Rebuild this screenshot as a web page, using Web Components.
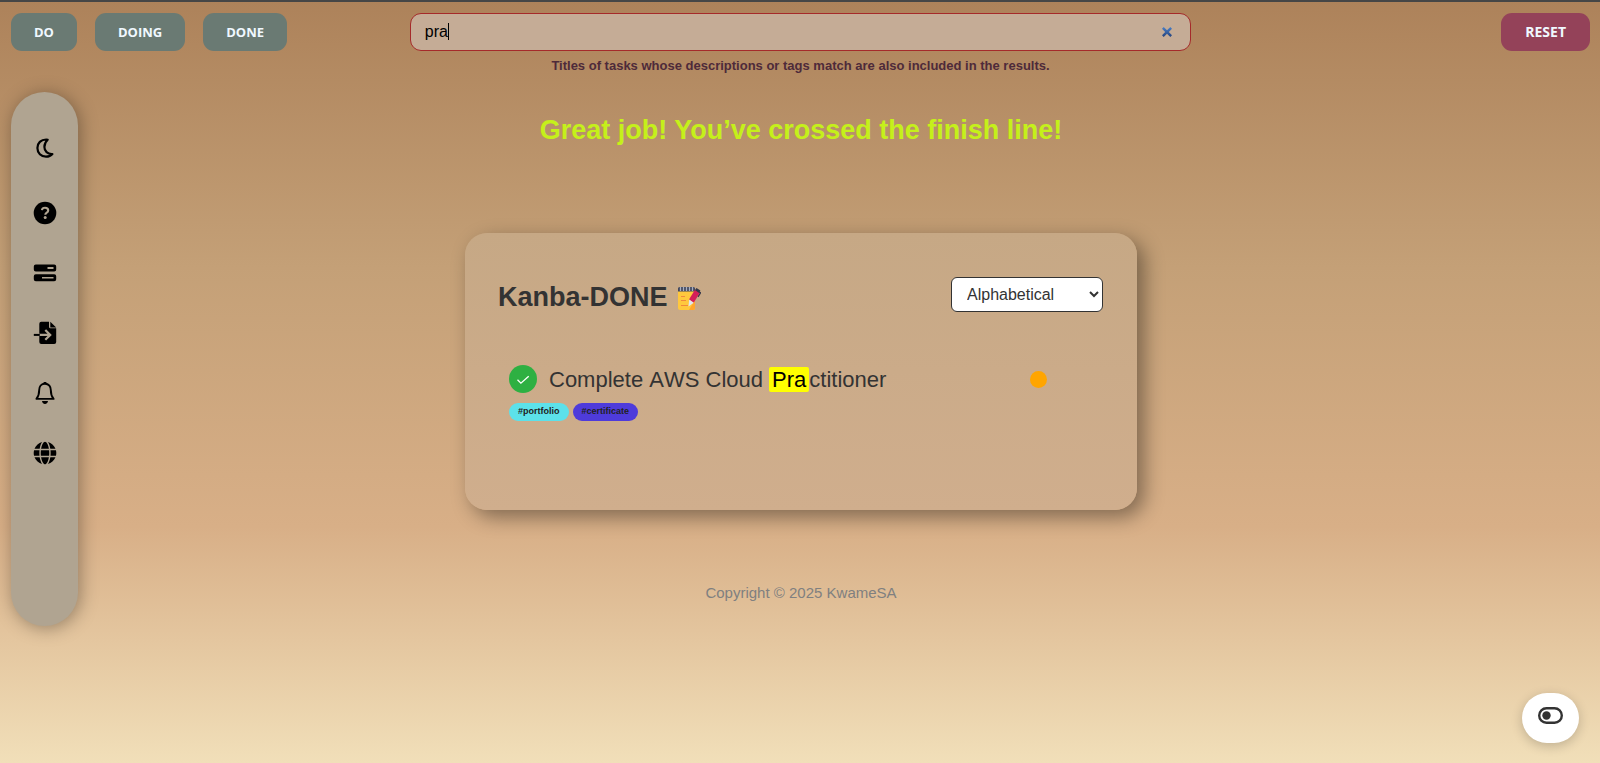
<!DOCTYPE html>
<html lang="en">
<head>
<meta charset="utf-8">
<title>Kanba-DONE</title>
<style>
  html { height: 100%; }
  body { margin: 0; min-height: 100%; font-family: "Liberation Sans", Arial, sans-serif; color: #333; }
</style>
</head>
<body>
<kanban-app></kanban-app>

<script>
const define = (name, markup, setup) => {
  const template = document.createElement('template');
  template.innerHTML = markup;
  customElements.define(name, class extends HTMLElement {
    constructor() {
      super();
      this.attachShadow({ mode: 'open' }).append(template.content.cloneNode(true));
    }
    connectedCallback() { if (setup) setup(this, this.shadowRoot); }
  });
};

define('nav-button', `
  <style>
    :host { display: block; }
    button { display: block; height: 38px; padding: 0 var(--button-padding, 23px); border: 0; border-radius: 11px;
      background: var(--button-color, #6a7a73); color: #f0f8ff; cursor: pointer;
      font: 700 var(--button-size, 13px)/36px "Open Sans", sans-serif; }
  </style>
  <button type="button"><slot></slot></button>`);

define('search-box', `
  <style>
    :host { display: block; text-align: center; }
    .field { position: relative; display: flex; align-items: center; box-sizing: border-box; height: 38px; padding: 0 18px 0 14px;
      border: 1px solid #a52a2a; border-radius: 11px; background: #c5ac96; }
    input { flex: 1; min-width: 0; padding: 0; border: 0; outline: 0; background: none; color: #000;
      font: 16px/20px "Liberation Sans", Arial, sans-serif; }
    .caret { position: absolute; left: 37px; top: 9px; width: 1px; height: 17px; background: #000; }
    button { display: block; padding: 0; border: 0; background: none; cursor: pointer; }
    svg { display: block; width: 10px; height: 10px; }
    p { margin: 6px 0 0; color: #4e2a3a; font-weight: bold; font-size: 13px; line-height: 18px; }
  </style>
  <div class="field">
    <input type="text" value="pra" aria-label="Search tasks" aria-describedby="hint">
    <span class="caret"></span>
    <button type="button" aria-label="Clear search">
      <svg viewBox="0 0 10 10"><defs><linearGradient id="g" x2="0" y2="1"><stop stop-color="#4a80c8"/><stop offset="1" stop-color="#24427c"/></linearGradient></defs><path d="M1.700 0 5 3.200 8.300 0 10 1.700 6.800 5 10 8.300 8.300 10 5 6.800 1.700 10 0 8.300 3.200 5 0 1.700z" fill="url(#g)"/></svg>
    </button>
  </div>
  <p id="hint"><slot></slot></p>`, (host, root) => {
    const input = root.querySelector('input');
    const caret = root.querySelector('.caret');
    input.addEventListener('input', () => caret.remove());
    root.querySelector('button').addEventListener('click', () => { input.value = ''; caret.remove(); input.focus(); });
  });

define('top-bar', `
  <style>
    :host { display: grid; grid-template-columns: 1fr 2fr 1fr; gap: 8px; align-items: start;
      padding: 11px 10px 0 11px; border-top: 2px solid #464646; }
    nav { display: flex; gap: 18px; }
    .reset { justify-self: end; --button-color: #944259; --button-size: 14px; --button-padding: 24px; }
  </style>
  <nav><nav-button>DO</nav-button><nav-button>DOING</nav-button><nav-button>DONE</nav-button></nav>
  <search-box>Titles of tasks whose descriptions or tags match are also included in the results.</search-box>
  <nav-button class="reset">RESET</nav-button>`);

define('icon-button', `
  <style>
    :host { display: block; }
    button { display: grid; place-items: center; width: 44px; height: 44px; padding: 0; border: 0;
      background: none; color: #000; cursor: pointer; }
    ::slotted(svg) { display: block; width: 24px; height: 24px; }
  </style>
  <button type="button"><slot></slot></button>`, (host, root) => {
    root.querySelector('button').setAttribute('aria-label', host.getAttribute('label'));
  });

define('side-bar', `
  <style>
    :host { display: flex; flex-direction: column; align-items: center; gap: 16px; box-sizing: border-box;
      width: 67px; height: 70vh; padding-top: 34px; border-radius: 34px; background: #b0a491;
      box-shadow: 2px 2px 18px rgba(0, 0, 0, .34); }
    .theme { margin-bottom: 5px; }
  </style>
  <icon-button class="theme" label="Dark mode"><svg viewBox="0 0 24 24"><path d="M13.200 3.500C7.900 3.500 4.400 7 4.400 12s3.700 8.700 8.600 8.700c2.800 0 5-1 6.400-2.700-4.900.3-8-2.900-8-7 0-3.300 1.600-5.700 3.300-7.200-.5-.2-1-.3-1.500-.3z" fill="none" stroke="#000" stroke-width="2.200" stroke-linejoin="round"/></svg></icon-button>
  <icon-button label="Help"><svg viewBox="0 0 24 24"><circle cx="12" cy="12" r="11.300"/><path d="M8.900 9.100c.3-1.500 1.400-2.300 3.100-2.300 1.900 0 3.200 1 3.200 2.600 0 2.300-2.900 2.200-2.900 4.300" fill="none" stroke="#b0a491" stroke-width="2.100"/><circle cx="12.200" cy="16.600" r="1.500" fill="#b0a491"/></svg></icon-button>
  <icon-button label="Boards"><svg viewBox="0 0 24 24"><path fill-rule="evenodd" d="M2.800 3.500h18.400a2 2 0 0 1 2 2v3a2 2 0 0 1-2 2H2.800a2 2 0 0 1-2-2v-3a2 2 0 0 1 2-2zM14.500 6v2h6v-2zM2.800 13.200h18.400a2 2 0 0 1 2 2v3a2 2 0 0 1-2 2H2.800a2 2 0 0 1-2-2v-3a2 2 0 0 1 2-2zM9 15.900v1.700h11.500v-1.700z"/></svg></icon-button>
  <icon-button label="Import"><svg viewBox="0 0 24 24"><path d="M8.300.8h7.700v5a1.500 1.500 0 0 0 1.500 1.500h5.700v13.700a2 2 0 0 1-2 2H8.300a2 2 0 0 1-2-2V14.900h8.200l-3 3 1.600 1.600 5.700-5.600-5.700-5.700-1.600 1.600 3 3H6.300V2.800a2 2 0 0 1 2-2zM17.300.8l5.900 5.600h-5.900z"/><path d="M.8 12.900h6v2h-6z"/></svg></icon-button>
  <icon-button label="Notifications"><svg viewBox="0 0 24 24"><path d="M12 2.700c-3.900 0-5.800 2.900-5.800 6.300 0 4.500-1 6.800-2.800 8.900h17.200c-1.800-2.100-2.800-4.400-2.800-8.900 0-3.400-1.900-6.300-5.800-6.300z" fill="none" stroke="#000" stroke-width="1.900" stroke-linejoin="round"/><path d="M10.600.9h2.800v2.200h-2.800zM9 20h6c-.2 1.800-1.300 2.900-3 2.900S9.200 21.800 9 20z"/></svg></icon-button>
  <icon-button label="Language"><svg viewBox="-16 -16 544 544"><path d="M352 256c0 22.200-1.200 43.600-3.300 64H163.300c-2.200-20.400-3.300-41.800-3.300-64s1.200-43.600 3.300-64H348.700c2.200 20.400 3.300 41.800 3.300 64zm28.800-64H503.900c5.300 20.500 8.100 41.900 8.100 64s-2.800 43.500-8.100 64H380.800c2.100-20.600 3.200-42 3.200-64s-1.100-43.400-3.200-64zm112.600-32H376.700c-10-63.900-29.800-117.400-55.300-151.600c78.300 20.700 142 77.500 171.900 151.600zm-149.100 0H167.700c6.100-36.400 15.500-68.600 27-94.700c10.500-23.600 22.200-40.700 33.500-51.500C239.400 3.200 248.700 0 256 0s16.600 3.200 27.800 13.800c11.300 10.800 23 27.900 33.500 51.500c11.600 26 20.900 58.200 27 94.700zm-209 0H18.600C48.600 85.900 112.200 29.100 190.600 8.400C165.100 42.600 145.300 96.100 135.300 160zM8.100 192H131.200c-2.100 20.600-3.200 42-3.200 64s1.100 43.400 3.200 64H8.100C2.800 299.500 0 278.100 0 256s2.800-43.500 8.100-64zM194.700 446.600c-11.600-26-20.900-58.200-27-94.600H344.300c-6.100 36.400-15.500 68.600-27 94.600c-10.500 23.600-22.200 40.700-33.500 51.500C272.600 508.800 263.300 512 256 512s-16.600-3.200-27.800-13.800c-11.300-10.800-23-27.900-33.500-51.500zM135.300 352c10 63.900 29.800 117.400 55.300 151.600C112.200 482.900 48.600 426.100 18.600 352H135.300zm358.100 0c-30 74.100-93.600 130.900-171.900 151.600c25.500-34.200 45.200-87.700 55.300-151.600H493.400z"/></svg></icon-button>`);

define('tag-pill', `
  <style>
    :host { display: block; height: 18px; padding: 0 9px; border-radius: 9px; background: var(--tag-color);
      color: #222; font-weight: bold; font-size: 9px; line-height: 16px; }
  </style>
  <slot></slot>`);

define('task-item', `
  <style>
    :host { display: block; }
    .row { display: flex; align-items: center; height: 32px; }
    .tick { display: block; flex: none; appearance: none; width: 28px; height: 28px; margin: 0 12px 0 0; border-radius: 50%;
      background: #2eb042; }
    label { display: flex; align-items: center; flex: 1; font-size: 22px; line-height: 25px; font-kerning: none; }
    .check { position: relative; display: block; }
    .check svg { position: absolute; top: 0; left: 0; width: 28px; height: 28px; pointer-events: none; }
    .dot { flex: none; width: 17px; height: 17px; border-radius: 50%; background: #ffa500; }
    .tags { display: flex; gap: 4px; margin-top: 8px; }
  </style>
  <div class="row">
    <label>
      <span class="check"><input class="tick" type="checkbox" checked><svg viewBox="0 0 28 28"><path d="M8.500 14.800l3.400 3.400 7.800-6.900" fill="none" stroke="#fff" stroke-width="1.300"/></svg></span>
      <span><slot></slot></span>
    </label>
    <span class="dot" title="Medium priority"></span>
  </div>
  <div class="tags"><slot name="tags"></slot></div>`);

define('task-board', `
  <style>
    :host { display: block; box-sizing: border-box; width: 42vw; min-height: 277px; padding: 44px 34px 0 33px; border-radius: 22px;
      background: linear-gradient(#c6a885, #d0ae8d); box-shadow: 7px 7px 20px rgba(0, 0, 0, .4); }
    header { display: flex; justify-content: space-between; align-items: start; }
    h2 { display: flex; align-items: center; gap: 9px; margin: 5px 0 0; font-size: 27px; line-height: 31px; }
    h2 svg { display: block; width: 24px; height: 24px; margin-top: 2px; }
    select { display: block; box-sizing: border-box; width: 152px; height: 35px; padding: 0 0 0 11px; border: 1px solid #333; border-radius: 6px;
      background: #fff; color: #333; font: 16px "Liberation Sans", Arial, sans-serif; }
    task-item { margin: 50px 56px 0 11px; }
    mark { padding: 0 3px; border-radius: 2px; background: #ff0; color: #000; }
  </style>
  <header>
    <h2>Kanba-DONE
      <svg viewBox="0 0 24 24" aria-hidden="true"><path d="M1 3h17v18a2 2 0 0 1-2 2H3a2 2 0 0 1-2-2z" fill="#ffc83d"/><path d="M12 23l6-10v8a2 2 0 0 1-2 2z" fill="#ffa62e"/><path d="M1 4.500V1.500A1.500 1.500 0 0 1 2.500 0h14A1.500 1.500 0 0 1 18 1.500V4.500z" fill="#43475c"/><path d="M3.500 0v4M6.500 0v4M9.500 0v4M12.500 0v4M15.500 0v4" stroke="#a6aec2" stroke-width="1.300"/><path d="M4 9.500h4M4 13.500h5M4 18.500h7" stroke="#f08a3c" stroke-width="1.200"/><path d="M19.500 1l3.900 2.400-2 3.600-4.200-2.900z" fill="#35384a"/><path d="M21.500 4.500l2 1.300-2.500 4" fill="none" stroke="#35384a" stroke-width="1.400"/><path d="M17.800 3l4.700 3.200-5.800 9.600-4.700-3.200z" fill="#d41f59"/><path d="M12.200 12.600l4.500 3.200-5.200 3.800z" fill="#e0e6f0"/></svg>
    </h2>
    <select aria-label="Sort tasks"><option>Alphabetical</option></select>
  </header>
  <task-item>Complete AWS Cloud <mark>Pra</mark>ctitioner
    <tag-pill slot="tags" style="--tag-color:#5ce1ea">#portfolio</tag-pill>
    <tag-pill slot="tags" style="--tag-color:#4e3bdb">#certificate</tag-pill>
  </task-item>`);

define('mode-toggle', `
  <style>
    :host { position: fixed; right: 21px; bottom: 20px; }
    button { display: grid; place-items: center; width: 57px; height: 50px; padding: 0 0 5px; border: 0; border-radius: 25px;
      background: #fff; box-shadow: 0 3px 12px rgba(0, 0, 0, .2); cursor: pointer; }
    svg { display: block; width: 25px; height: 17px; }
  </style>
  <button type="button" aria-label="Toggle compact view">
    <svg viewBox="0 0 25 17"><rect x="1.200" y="1.200" width="22.600" height="14.600" rx="7.300" fill="none" stroke="#333" stroke-width="2.400"/><circle cx="8.500" cy="8.500" r="4.200" fill="#333"/></svg>
  </button>`);

define('kanban-app', `
  <style>
    :host { display: block; box-sizing: border-box; min-height: 100vh;
      background: linear-gradient(#ad825a 0%, #c4a077 35%, #d8af87 69%, #f1dfb9 100%); }
    .page { display: grid; grid-template-columns: 67px 1fr 67px; align-items: start; padding: 17px 9px 0 11px; }
    main { display: flex; flex-direction: column; align-items: center; padding-top: 22px; }
    h1 { margin: 0; color: #c5f01a; font-size: 27px; line-height: 32px; text-align: center; }
    task-board { margin-top: 87px; }
    footer { margin-top: 74px; color: #808080; font-size: 15px; line-height: 18px; }
  </style>
  <top-bar></top-bar>
  <div class="page">
    <side-bar></side-bar>
    <main>
      <h1>Great job! You’ve crossed the finish line!</h1>
      <task-board></task-board>
      <footer>Copyright © 2025 KwameSA</footer>
    </main>
  </div>
  <mode-toggle></mode-toggle>`);
</script>
</body>
</html>
